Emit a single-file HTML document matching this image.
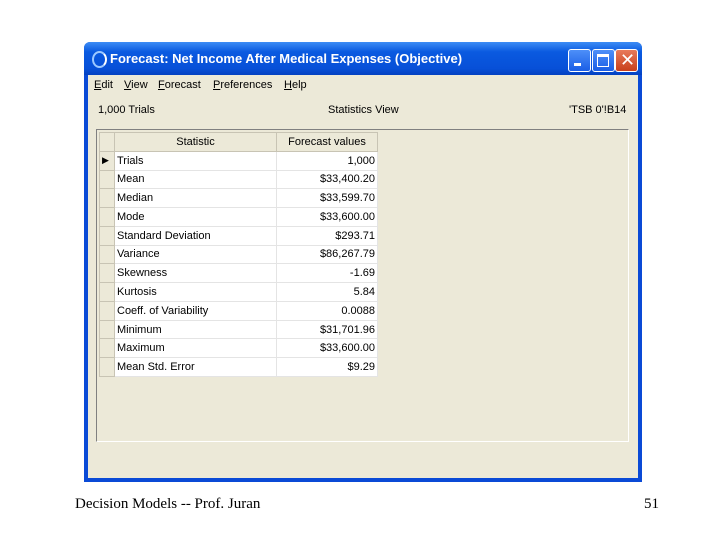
<!DOCTYPE html>
<html><head><style>
body{margin:0;width:720px;height:540px;background:#fff;position:relative;overflow:hidden;font-family:"Liberation Sans",sans-serif;}
.win{position:absolute;left:84px;top:42px;width:558px;height:440px;background:#0a4ad6;border-radius:6px 6px 0 0;}
.title{position:absolute;left:0;top:0;width:558px;height:33px;border-radius:6px 6px 0 0;background:linear-gradient(#3d8df5,#0a5ae0 30%,#0750d8 80%,#0440c0);}
.title span{position:absolute;left:26px;top:9px;color:#fff;font-weight:bold;font-size:13px;}
.ico{position:absolute;left:8px;top:9px;width:11px;height:13px;border-radius:50%;border:2px solid #9cc8ff;border-right-color:#fff;}
.btn{position:absolute;top:7px;width:21px;height:21px;border:1px solid #fff;border-radius:3px;background:linear-gradient(#4d8ff8,#1a5ee6);}
.client{position:absolute;left:4px;top:33px;width:550px;height:403px;background:#ece9d8;}
.t{position:absolute;font-size:11px;color:#000;white-space:nowrap;}
.grid{position:absolute;left:8px;top:54px;width:531px;height:311px;background:#ece9d8;border-left:1px solid #808080;border-top:1px solid #808080;border-right:1px solid #fff;border-bottom:1px solid #fff;}
table{position:absolute;left:2px;top:2px;border-collapse:collapse;font-size:11px;}
td{height:17.77px;padding:0 2px;border:1px solid #e4e4e4;background:#fff;white-space:nowrap;}
td.rh{width:10px;background:#ece9d8;border:1px solid #c8c4b4;}
td.v{width:96px;text-align:right;}
td.s{width:157px;}
tr.h td{background:#ece9d8;text-align:center;border:1px solid #c8c4b4;}
.foot{position:absolute;top:496px;font-family:"Liberation Serif",serif;font-size:15px;}
</style></head><body>
<div class="win">
<div class="title"><div class="ico"></div><span>Forecast: Net Income After Medical Expenses (Objective)</span>
<div class="btn" style="left:484px"><div style="position:absolute;left:5px;top:13px;width:7px;height:3px;background:#fff"></div></div>
<div class="btn" style="left:508px"><div style="position:absolute;left:4px;top:4px;width:10px;height:9px;border:1px solid #fff;border-top-width:3px"></div></div>
<div class="btn" style="left:531px;background:linear-gradient(#e87a5a,#c8401c)"><span style="left:4px;top:0;font-size:18px;font-weight:normal">✕</span></div>
</div>
<div class="client">
<div class="t" style="left:6px;top:4px"><u>E</u>dit</div>
<div class="t" style="left:36px;top:4px"><u>V</u>iew</div>
<div class="t" style="left:70px;top:4px"><u>F</u>orecast</div>
<div class="t" style="left:125px;top:4px"><u>P</u>references</div>
<div class="t" style="left:196px;top:4px"><u>H</u>elp</div>
<div class="t" style="left:10px;top:29px">1,000 Trials</div>
<div class="t" style="left:240px;top:29px">Statistics View</div>
<div class="t" style="left:481px;top:29px">'TSB 0'!B14</div>
<div class="grid"><table>
<tr class="h"><td class="rh"></td><td class="s" style="text-align:center">Statistic</td><td class="v" style="text-align:center">Forecast values</td></tr>
<tr><td class="rh" style="font-size:9px">▶</td><td class="s">Trials</td><td class="v">1,000</td></tr>
<tr><td class="rh"></td><td class="s">Mean</td><td class="v">$33,400.20</td></tr>
<tr><td class="rh"></td><td class="s">Median</td><td class="v">$33,599.70</td></tr>
<tr><td class="rh"></td><td class="s">Mode</td><td class="v">$33,600.00</td></tr>
<tr><td class="rh"></td><td class="s">Standard Deviation</td><td class="v">$293.71</td></tr>
<tr><td class="rh"></td><td class="s">Variance</td><td class="v">$86,267.79</td></tr>
<tr><td class="rh"></td><td class="s">Skewness</td><td class="v">-1.69</td></tr>
<tr><td class="rh"></td><td class="s">Kurtosis</td><td class="v">5.84</td></tr>
<tr><td class="rh"></td><td class="s">Coeff. of Variability</td><td class="v">0.0088</td></tr>
<tr><td class="rh"></td><td class="s">Minimum</td><td class="v">$31,701.96</td></tr>
<tr><td class="rh"></td><td class="s">Maximum</td><td class="v">$33,600.00</td></tr>
<tr><td class="rh"></td><td class="s">Mean Std. Error</td><td class="v">$9.29</td></tr>
</table></div>
</div>
</div>
<div class="foot" style="left:75px">Decision Models -- Prof. Juran</div>
<div class="foot" style="left:644px">51</div>
</body></html>
